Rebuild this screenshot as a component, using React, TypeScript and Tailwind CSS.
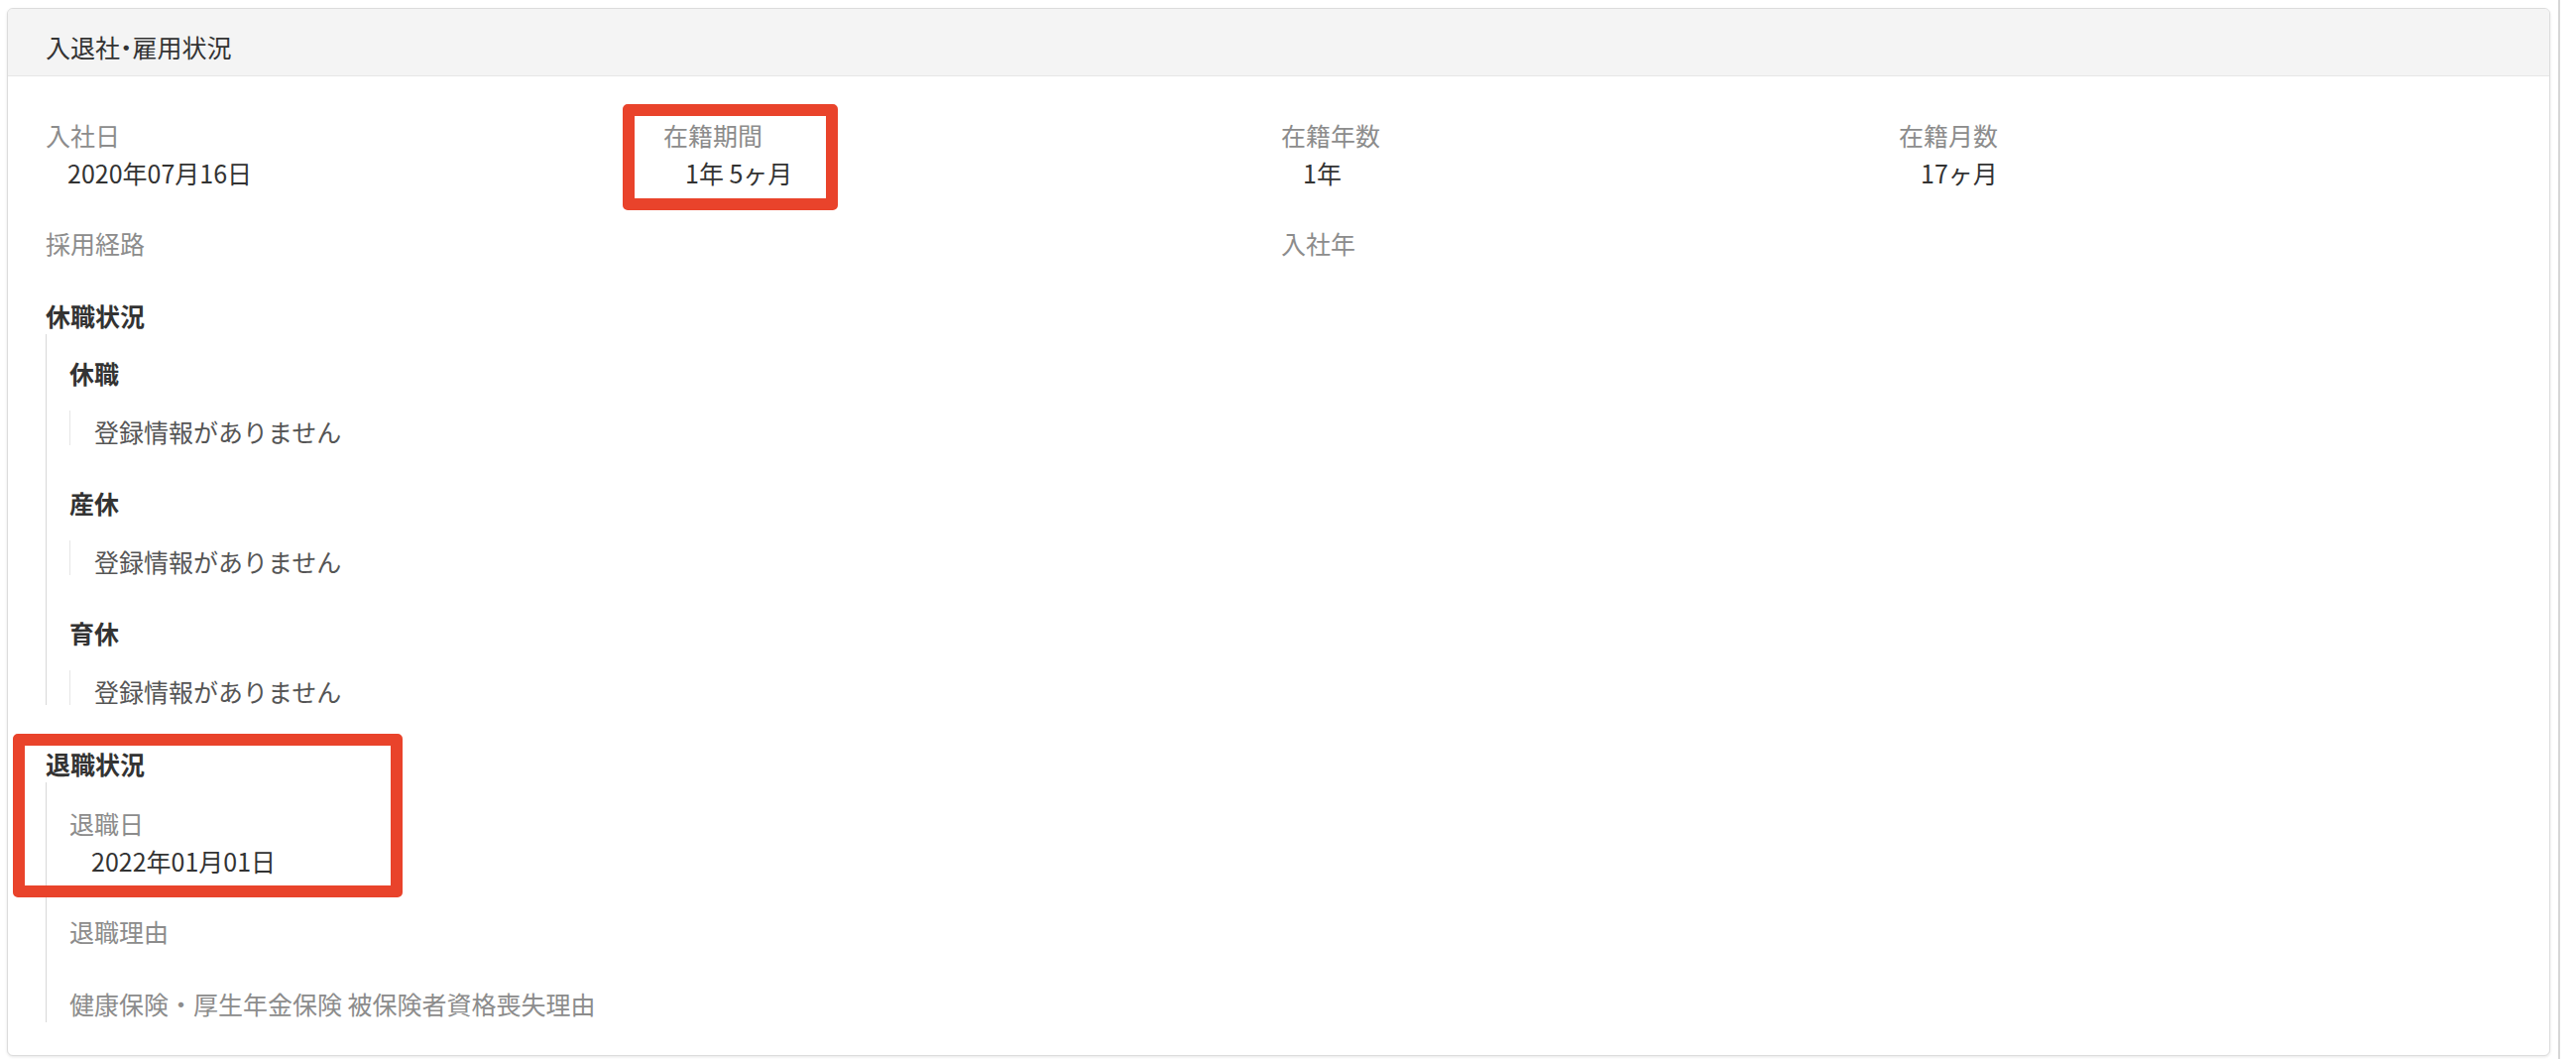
type Field = { label: string; value?: string; mark?: boolean };

const topRow: Field[] = [
  { label: "入社日", value: "2020年07月16日" },
  { label: "在籍期間", value: "1年 5ヶ月", mark: true },
  { label: "在籍年数", value: "1年" },
  { label: "在籍月数", value: "17ヶ月" },
];

const leaves = ["休職", "産休", "育休"];

function FieldItem({ label, value, mark }: Field) {
  return (
    <div className="relative">
      {mark && (
        <div className="absolute -left-[41px] -top-[12px] h-[107px] w-[217px] rounded-[5px] border-[12px] border-[#e9432b]" />
      )}
      <div className="text-[#8c8c8c]">{label}</div>
      {value && <div className="pl-[22px] text-[#333]">{value}</div>}
    </div>
  );
}

export default function App() {
  return (
    <div className="flex h-[1068px] w-[2598px] bg-white font-['Noto_Sans_CJK_JP',sans-serif] text-[25px] leading-[38px]">
      <div className="pl-[7px] pt-[8px]">
        <div className="w-[2565px] overflow-hidden rounded-[6px] border border-[#dcdcdc] bg-white shadow-[0_1px_3px_rgba(0,0,0,0.10)]">
          <div className="border-b border-[#e6e6e6] bg-[#f4f4f4] pb-[10px] pl-[38px] pt-[19px] leading-[38px] text-[#333] [font-feature-settings:'palt']">
            入退社・雇用状況
          </div>

          <div className="px-[38px] pb-[33px] pt-[40px]">
            <div className="mb-[33px] grid grid-cols-[repeat(4,623px)]">
              {topRow.map((f) => (
                <FieldItem key={f.label} {...f} />
              ))}
            </div>
            <div className="mb-[35px] grid grid-cols-[repeat(2,1246px)]">
              <FieldItem label="採用経路" />
              <FieldItem label="入社年" />
            </div>

            {/* 休職状況 */}
            <div className="font-bold text-[#333]">休職状況</div>
            <div className="border-l border-[#d9d9d9] pl-[23px] pt-[20px]">
              {leaves.map((name, i) => (
                <div key={name} className={i > 0 ? "mt-[39px]" : ""}>
                  <div className="font-bold text-[#333]">{name}</div>
                  <div className="mt-[19px] h-[35px] border-l border-[#e6e6e6] pl-[24px] leading-[42px] text-[#555]">
                    登録情報がありません
                  </div>
                </div>
              ))}
            </div>

            {/* 退職状況 */}
            <div className="relative mt-[40px]">
              <div className="absolute -left-[33px] -top-[11px] h-[165px] w-[393px] rounded-[5px] border-[12px] border-[#e9432b]" />
              <div className="font-bold text-[#333]">退職状況</div>
              <div className="border-l border-[#d9d9d9] pl-[23px] pt-[22px]">
                <div className="text-[#8c8c8c]">退職日</div>
                <div className="pl-[22px] text-[#333]">2022年01月01日</div>
                <div className="mt-[33px] text-[#8c8c8c]">退職理由</div>
                <div className="mt-[35px] text-[#8c8c8c]">健康保険・厚生年金保険 被保険者資格喪失理由</div>
              </div>
            </div>
          </div>
        </div>
      </div>
      <div className="ml-[8px] h-full w-[2px] bg-[#d6d6d6]" />
    </div>
  );
}
